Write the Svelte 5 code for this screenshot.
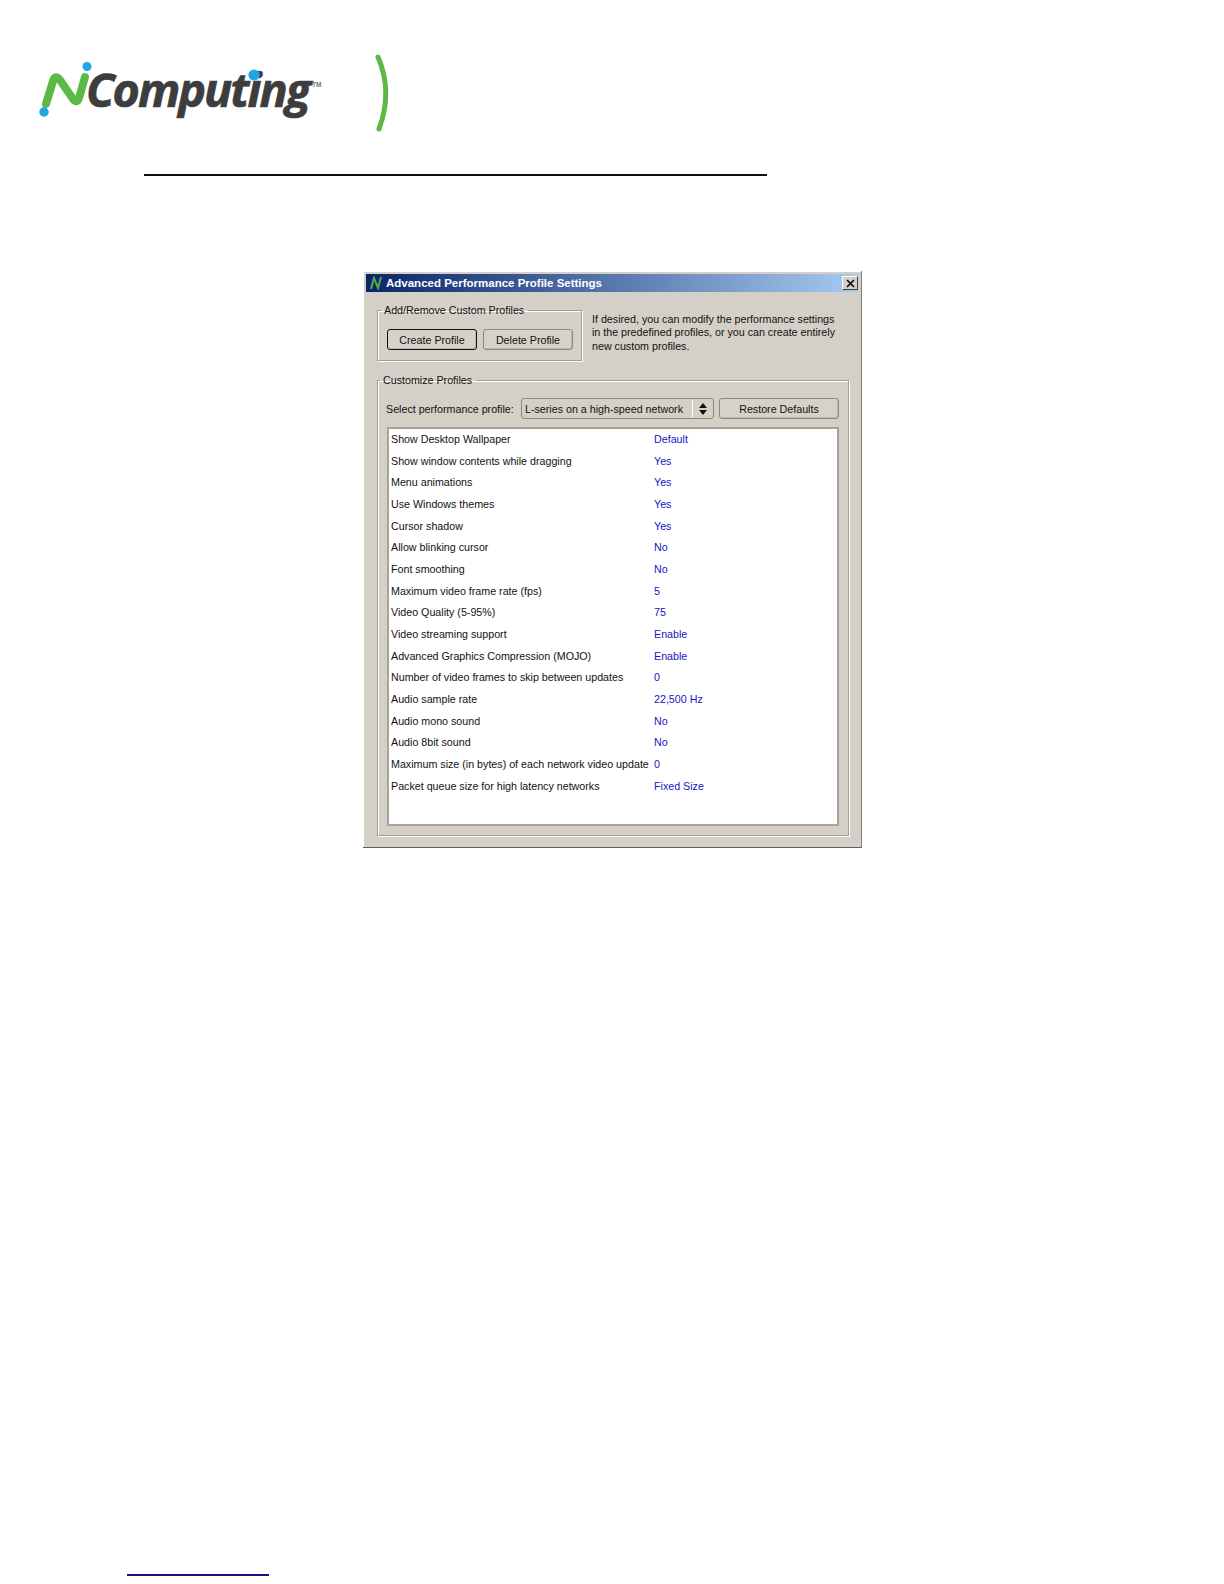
<script>
    const settings = [
        ["Show Desktop Wallpaper", "Default"],
        ["Show window contents while dragging", "Yes"],
        ["Menu animations", "Yes"],
        ["Use Windows themes", "Yes"],
        ["Cursor shadow", "Yes"],
        ["Allow blinking cursor", "No"],
        ["Font smoothing", "No"],
        ["Maximum video frame rate (fps)", "5"],
        ["Video Quality (5-95%)", "75"],
        ["Video streaming support", "Enable"],
        ["Advanced Graphics Compression (MOJO)", "Enable"],
        ["Number of video frames to skip between updates", "0"],
        ["Audio sample rate", "22,500 Hz"],
        ["Audio mono sound", "No"],
        ["Audio 8bit sound", "No"],
        ["Maximum size (in bytes) of each network video update", "0"],
        ["Packet queue size for high latency networks", "Fixed Size"]
    ];
</script>

<div class="page">
    <svg class="logo" width="370" height="90" viewBox="30 50 370 90">
        <path class="green" stroke-width="8" d="M46 104 L53 81 Q55 74 60 80 L73 99 Q77 104 79 98 L85 77" />
        <circle class="blue" cx="44" cy="112" r="4.7" />
        <circle class="blue" cx="87" cy="66.5" r="4.5" />
        <text class="brand" x="86" y="107" textLength="223" lengthAdjust="spacingAndGlyphs">Computing</text>
        <circle class="blue" cx="254" cy="75" r="5.6" />
        <text class="tm" x="312" y="87">TM</text>
        <path class="green" stroke-width="5" d="M378 57 C388 80 388 105 379 129" />
    </svg>

    <div class="rule"></div>

    <div class="dialog">
        <div class="titlebar">
            <svg width="14" height="14" viewBox="0 0 14 14">
                <path d="M2 13 L5 2 L9 12 L12 1" fill="none" stroke="#4fae4a" stroke-width="2" />
            </svg>
            <span class="title">Advanced Performance Profile Settings</span>
            <button class="close" type="button" aria-label="Close">
                <svg width="9" height="9" viewBox="0 0 9 9">
                    <path d="M1 1 L8 8 M8 1 L1 8" stroke="#000" stroke-width="1.6" />
                </svg>
            </button>
        </div>

        <div class="top">
            <fieldset class="add-remove">
                <legend>Add/Remove Custom Profiles</legend>
                <button class="btn default" type="button">Create Profile</button>
                <button class="btn" type="button">Delete Profile</button>
            </fieldset>
            <p class="hint">If desired, you can modify the performance settings in the predefined profiles, or you can create entirely new custom profiles.</p>
        </div>

        <fieldset class="customize">
            <legend>Customize Profiles</legend>
            <div class="selector">
                <span class="select-label">Select performance profile:</span>
                <div class="select">
                    <span class="select-value">L-series on a high-speed network</span>
                    <span class="arrows">
                        <svg width="10" height="14" viewBox="0 0 10 14">
                            <path d="M5 1 L9 6 L1 6 Z M5 13 L9 8 L1 8 Z" fill="#111" />
                        </svg>
                    </span>
                </div>
                <button class="btn restore" type="button">Restore Defaults</button>
            </div>
            <div class="list">
                {#each settings as [name, value]}
                    <div class="name">{name}</div>
                    <div class="value">{value}</div>
                {/each}
            </div>
        </fieldset>
    </div>

    <div class="footer-line"></div>
</div>

<style>
    :global(body) {
        margin: 0;
        background: #fff;
    }

    .page {
        height: 1584px;
        padding-top: 50px;
        box-sizing: border-box;
        overflow: hidden;
        font-family: "Liberation Sans", Arial, sans-serif;
    }

    .logo {
        display: block;
        margin-left: 30px;
    }

    .green {
        fill: none;
        stroke: #5cb947;
        stroke-linecap: round;
        stroke-linejoin: round;
    }

    .blue {
        fill: #1fa6e6;
    }

    .brand {
        font-family: "Open Sans", sans-serif;
        font-weight: 700;
        font-style: italic;
        font-size: 47px;
        letter-spacing: -2px;
        fill: #3d3d3e;
        stroke: #3d3d3e;
        stroke-width: 0.7px;
    }

    .tm {
        font-family: "Liberation Sans", sans-serif;
        font-weight: 700;
        font-size: 6.5px;
        fill: #777;
    }

    .rule {
        width: 623px;
        height: 2px;
        margin: 34px 0 0 144px;
        background: #111;
    }

    .dialog {
        width: 499px;
        height: 577px;
        margin: 95px 0 0 363px;
        padding: 3px;
        box-sizing: border-box;
        background: #d4d0c8;
        border-right: 1px solid #808080;
        border-bottom: 1px solid #606060;
        box-shadow: inset 1px 1px 0 #fff;
        font-size: 10.7px;
        color: #111;
        display: flex;
        flex-direction: column;
    }

    .titlebar {
        height: 18px;
        flex: none;
        display: flex;
        align-items: center;
        gap: 3px;
        padding: 0 0 0 3px;
        background: linear-gradient(to right, #0a246a, #a6caf0);
    }

    .title {
        flex: 1;
        color: #fff;
        font-weight: 700;
        font-size: 11.5px;
    }

    .close {
        width: 16px;
        height: 14px;
        padding: 0;
        border: 1px solid;
        border-color: #fff #404040 #404040 #fff;
        background: #d4d0c8;
        display: flex;
        align-items: center;
        justify-content: center;
    }

    .top {
        display: flex;
        margin: 11px 0 0 11px;
        align-items: flex-start;
        gap: 10px;
    }

    fieldset {
        margin: 0;
        box-sizing: border-box;
        border: 1px solid #a09f98;
        box-shadow: 1px 1px 0 #fff, inset 1px 1px 0 #fff;
    }

    legend {
        padding: 0 4px 0 3px;
        margin-left: -6px;
        line-height: 14px;
        white-space: nowrap;
    }

    .add-remove {
        width: 205px;
        height: 58px;
        padding: 12px 0 0 9px;
        flex: none;
        display: flex;
        gap: 6px;
    }

    .btn {
        height: 21px;
        padding: 0;
        font: inherit;
        color: inherit;
        background: #d6d2ca;
        border: 1px solid #8a8880;
        border-radius: 3px;
        box-shadow: inset -1px -1px 0 #bdb9b0;
    }

    .add-remove .btn {
        width: 90px;
    }

    .btn.default {
        border-color: #111;
    }

    .hint {
        width: 250px;
        margin: 10px 0 0;
        line-height: 13.4px;
    }

    .customize {
        width: 472px;
        height: 463px;
        margin: 12px 0 0 11px;
        padding: 11px 0 0 8px;
    }

    .selector {
        display: flex;
        align-items: center;
        height: 21px;
    }

    .select-label {
        width: 135px;
        flex: none;
        white-space: nowrap;
    }

    .select {
        width: 193px;
        height: 21px;
        box-sizing: border-box;
        border: 1px solid #8a8880;
        border-radius: 3px;
        display: flex;
        align-items: center;
        padding-left: 3px;
    }

    .select-value {
        flex: 1;
        white-space: nowrap;
    }

    .arrows {
        width: 20px;
        height: 17px;
        border-left: 1px solid #fff;
        display: flex;
        align-items: center;
        justify-content: center;
    }

    .restore {
        width: 120px;
        margin-left: 5px;
    }

    .list {
        width: 452px;
        height: 399px;
        margin: 8px 0 0 1px;
        padding: 0 0 0 2px;
        box-sizing: border-box;
        background: #fff;
        border: 2px solid #a5a39b;
        display: grid;
        grid-template-columns: 263px 1fr;
        grid-auto-rows: 21.7px;
        align-items: center;
        align-content: start;
    }

    .name {
        padding-bottom: 2px;
        white-space: nowrap;
    }

    .value {
        padding-bottom: 2px;
        color: #1a14c4;
    }

    .footer-line {
        width: 142px;
        height: 2px;
        margin: 726px 0 0 127px;
        background: #14147e;
    }
</style>
